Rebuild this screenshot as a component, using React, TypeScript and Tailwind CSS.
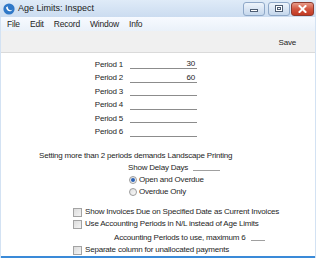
import React from "react";

const rows = [
  { label: "Period 1", value: "30" },
  { label: "Period 2", value: "60" },
  { label: "Period 3", value: "" },
  { label: "Period 4", value: "" },
  { label: "Period 5", value: "" },
  { label: "Period 6", value: "" },
];

function Checkbox() {
  return (
    <span className="inline-block h-[9px] w-[9px] shrink-0 border border-[#a3a3a3] bg-gradient-to-br from-[#dcdcdc] to-[#f4f4f4]" />
  );
}

function Radio({ on }: { on?: boolean }) {
  return (
    <span className="flex h-[8px] w-[8px] shrink-0 items-center justify-center rounded-full border border-[#9c9c9c] bg-gradient-to-br from-[#e0e0e0] to-[#fafafa]">
      {on && <span className="h-[4px] w-[4px] rounded-full bg-[#2a63b8]" />}
    </span>
  );
}

function WinButton({ kind }: { kind: "min" | "max" | "close" }) {
  if (kind === "close") {
    return (
      <div className="flex h-[14px] w-[23px] items-center justify-center rounded-[3px] border border-[#8e3b2f] bg-gradient-to-b from-[#e79a88] via-[#d2553f] to-[#c23a24]">
        <svg width="9" height="8" viewBox="0 0 9 8">
          <path d="M1.5 1 L7.5 7 M7.5 1 L1.5 7" stroke="#fff" strokeWidth="2" strokeLinecap="square" />
        </svg>
      </div>
    );
  }
  return (
    <div className="flex h-[14px] w-[22px] items-center justify-center rounded-[3px] border border-[#8fa8c8] bg-gradient-to-b from-[#eef4fb] to-[#c5d7ec]">
      {kind === "min" ? (
        <span className="mt-[4px] h-[3px] w-[8px] border border-[#4d5d73] bg-white" />
      ) : (
        <span className="h-[7px] w-[8px] border border-[#4d5d73] bg-white p-[1px]">
          <span className="block h-full w-full border border-[#4d5d73]" />
        </span>
      )}
    </div>
  );
}

export default function App() {
  return (
    <div className="flex h-[258px] w-[316px] flex-col overflow-hidden bg-[#d3e2f3] font-['Liberation_Sans',Arial,sans-serif] text-[8px] leading-none tracking-[-0.2px] text-[#1e1e1e]">
      {/* title bar */}
      <div className="flex h-[17px] shrink-0 items-center bg-gradient-to-b from-[#dfebf8] to-[#cbdcf0] pl-[3px] pr-[2px]">
        <svg width="12" height="12" viewBox="0 0 12 12" className="shrink-0">
          <circle cx="6" cy="6" r="5.6" fill="#2f78c8" />
          <path d="M3 4.5 C3.5 8.5 8 9.5 9.5 6.5 C8 8 4.8 7.5 4.6 3.2 Z" fill="#fff" />
        </svg>
        <span className="ml-[3px] text-[9px] tracking-normal text-[#1b1b1b]">Age Limits: Inspect</span>
        <div className="ml-auto flex items-center gap-[1px]">
          <WinButton kind="min" />
          <div className="w-[1px]" />
          <WinButton kind="max" />
          <WinButton kind="close" />
        </div>
      </div>

      {/* menu bar */}
      <div className="mx-[1px] flex h-[14px] shrink-0 items-center gap-[10px] bg-gradient-to-b from-[#f7faff] to-[#eaf1f9] pl-[6px] text-[8.5px]">
        <span>File</span>
        <span>Edit</span>
        <span>Record</span>
        <span>Window</span>
        <span>Info</span>
      </div>

      {/* toolbar */}
      <div className="mx-[1px] flex h-[22px] shrink-0 items-center justify-end border-b border-[#dadada] bg-[#f0f0f0] pr-[19px] pt-[2px]">
        <span>Save</span>
      </div>

      {/* content */}
      <div className="mx-[1px] mb-[1px] flex flex-1 flex-col border-b-2 border-[#3a8ad8] bg-white pt-[5px]">
        {rows.map((r) => (
          <div key={r.label} className="flex h-[13.5px] items-center">
            <span className="w-[122px] text-right">{r.label}</span>
            <span className="ml-[7px] flex h-[9px] w-[67px] items-start justify-end border-b border-[#8c8c8c] pr-[2px]">
              {r.value}
            </span>
          </div>
        ))}

        <div className="mt-[11px] flex h-[12px] items-center pl-[38px]">
          Setting more than 2 periods demands Landscape Printing
        </div>

        <div className="flex h-[12px] items-center pl-[127px]">
          <span>Show Delay Days</span>
          <span className="ml-[5px] h-[5px] w-[27px] border-b border-[#a0a0a0]" />
        </div>
        <div className="flex h-[12px] items-center gap-[2px] pl-[128px]">
          <Radio on />
          <span>Open and Overdue</span>
        </div>
        <div className="flex h-[12px] items-center gap-[2px] pl-[128px]">
          <Radio />
          <span>Overdue Only</span>
        </div>

        <div className="mt-[8px] flex h-[12px] items-center gap-[3px] pl-[72px]">
          <Checkbox />
          <span>Show Invoices Due on Specified Date as Current Invoices</span>
        </div>
        <div className="flex h-[12px] items-center gap-[3px] pl-[72px]">
          <Checkbox />
          <span>Use Accounting Periods in N/L instead of Age Limits</span>
        </div>
        <div className="mt-[2px] flex h-[12px] items-center pl-[113px]">
          <span>Accounting Periods to use, maximum 6</span>
          <span className="ml-[5px] h-[5px] w-[14px] border-b border-[#a0a0a0]" />
        </div>
        <div className="flex h-[12px] items-center gap-[3px] pl-[72px]">
          <Checkbox />
          <span>Separate column for unallocated payments</span>
        </div>
      </div>
    </div>
  );
}
